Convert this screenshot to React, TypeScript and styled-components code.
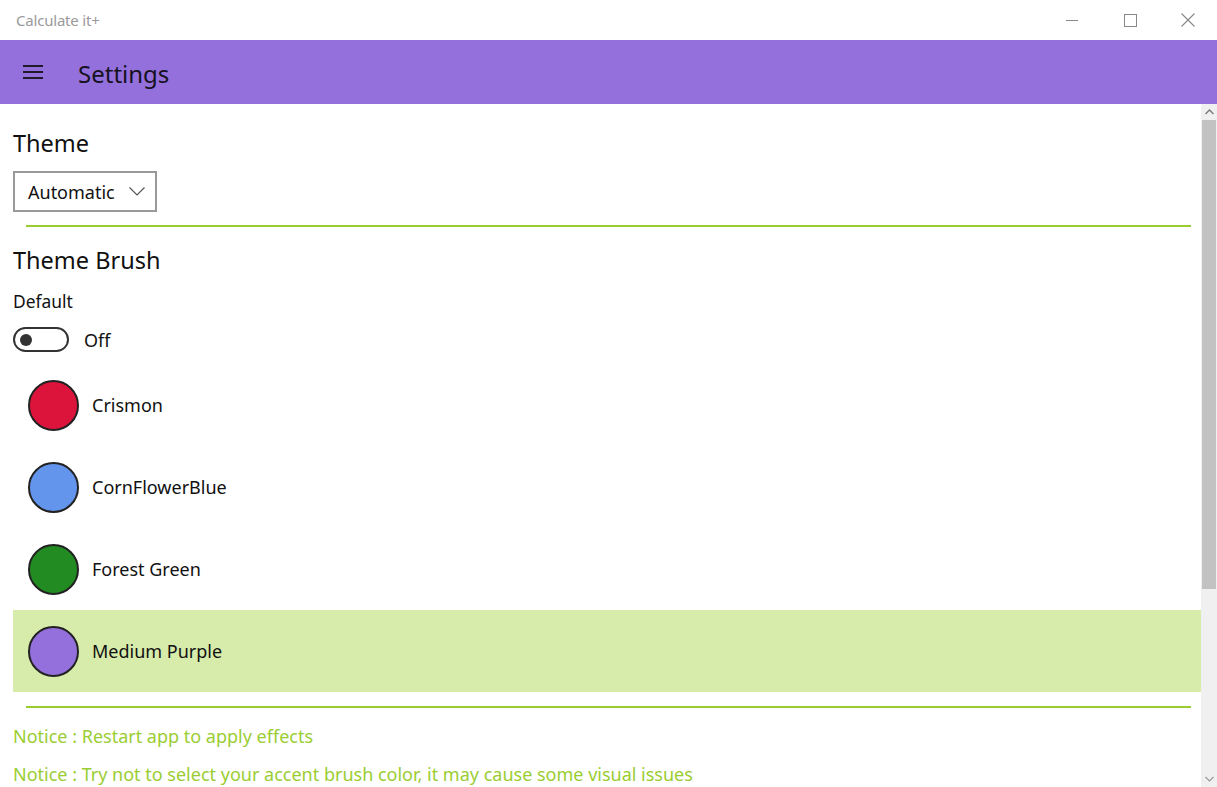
import React from "react";
import styled, { createGlobalStyle } from "styled-components";

const Global = createGlobalStyle`
  html, body { margin: 0; padding: 0; background: #fff; }
  body { font-family: "Noto Sans", "Open Sans", sans-serif; overflow: hidden; }
  * { box-sizing: border-box; }
`;

const Window = styled.div`
  width: 1217px;
  height: 787px;
  display: flex;
  flex-direction: column;
  overflow: hidden;
  background: #fff;
`;

const TitleBar = styled.div`
  height: 40px;
  display: flex;
  align-items: center;
  justify-content: space-between;
  padding-left: 16px;
  flex: none;
`;

const TitleText = styled.span`
  font-size: 15px;
  color: #9a9a9a;
  letter-spacing: -0.2px;
`;

const Controls = styled.div`
  display: flex;
  height: 100%;
`;

const CtrlButton = styled.div`
  width: 58px;
  height: 100%;
  display: flex;
  align-items: center;
  justify-content: center;
`;

const Header = styled.div`
  height: 64px;
  background: #9370db;
  display: flex;
  align-items: center;
  flex: none;
`;

const Burger = styled.div`
  width: 20px;
  margin-left: 23px;
  display: flex;
  flex-direction: column;
  gap: 4px;
  span {
    display: block;
    height: 2px;
    background: #1f1a2a;
  }
`;

const HeaderTitle = styled.h1`
  margin: 3px 0 0 35px;
  font-size: 24px;
  font-weight: 400;
  color: #16121e;
  line-height: 1;
`;

const Body = styled.div`
  flex: 1;
  display: flex;
  min-height: 0;
`;

const Content = styled.div`
  flex: 1;
  padding-left: 13px;
  display: flex;
  flex-direction: column;
`;

const SectionTitle = styled.h2<{ $mt: number }>`
  margin: ${(p) => p.$mt}px 0 0 0;
  font-size: 23.5px;
  font-weight: 400;
  line-height: 32px;
  color: #111;
`;

const Dropdown = styled.div`
  margin-top: 12px;
  width: 144px;
  height: 41px;
  border: 2px solid #999;
  display: flex;
  align-items: center;
  justify-content: space-between;
  padding: 0 10px 0 13px;
  font-size: 18px;
  color: #111;
`;

const Divider = styled.div<{ $mt: number }>`
  margin: ${(p) => p.$mt}px 10px 0 13px;
  height: 2px;
  background: #9acd32;
  flex: none;
`;

const Label = styled.div`
  margin-top: 13px;
  font-size: 17.4px;
  line-height: 24px;
  color: #111;
`;

const ToggleRow = styled.div`
  margin-top: 14px;
  height: 25px;
  display: flex;
  align-items: center;
  gap: 15px;
  font-size: 18px;
  color: #111;
`;

const Toggle = styled.div`
  width: 56px;
  height: 25px;
  border: 2px solid #333;
  border-radius: 13px;
  display: flex;
  align-items: center;
  padding-left: 5px;
  &::before {
    content: "";
    width: 12px;
    height: 12px;
    border-radius: 50%;
    background: #333;
  }
`;

const List = styled.div`
  margin-top: 12px;
  display: flex;
  flex-direction: column;
`;

const Row = styled.div<{ $selected?: boolean }>`
  height: 82px;
  display: flex;
  align-items: center;
  padding-left: 15px;
  gap: 13px;
  background: ${(p) => (p.$selected ? "#d7ebab" : "transparent")};
  font-size: 18px;
  color: #111;
`;

const Swatch = styled.div<{ $color: string }>`
  width: 51px;
  height: 51px;
  border-radius: 50%;
  border: 2px solid #222;
  background: ${(p) => p.$color};
  flex: none;
`;

const Notice = styled.div<{ $mt: number }>`
  margin-top: ${(p) => p.$mt}px;
  font-size: 18px;
  line-height: 26px;
  color: #9acd32;
`;

const ScrollBar = styled.div`
  width: 16px;
  background: #f0f0f0;
  display: flex;
  flex-direction: column;
  flex: none;
`;

const Arrow = styled.div`
  height: 16px;
  display: flex;
  align-items: center;
  justify-content: center;
  flex: none;
`;

const Thumb = styled.div`
  height: 469px;
  margin: 0 1px 0 1px;
  background: #c2c2c2;
  flex: none;
`;

const Track = styled.div`
  flex: 1;
`;

const colors = [
  { name: "Crismon", color: "#dc143c" },
  { name: "CornFlowerBlue", color: "#6495ed" },
  { name: "Forest Green", color: "#228b22" },
  { name: "Medium Purple", color: "#9370db", selected: true },
];

export default function App() {
  return (
    <Window>
      <Global />
      <TitleBar>
        <TitleText>Calculate it+</TitleText>
        <Controls>
          <CtrlButton>
            <svg width="12" height="12" viewBox="0 0 12 12">
              <line x1="0" y1="6.5" x2="12" y2="6.5" stroke="#888" strokeWidth="1" />
            </svg>
          </CtrlButton>
          <CtrlButton>
            <svg width="13" height="13" viewBox="0 0 13 13">
              <rect x="0.5" y="0.5" width="12" height="12" fill="none" stroke="#888" strokeWidth="1" />
            </svg>
          </CtrlButton>
          <CtrlButton>
            <svg width="14" height="14" viewBox="0 0 14 14">
              <path d="M0.5 0.5 L13.5 13.5 M13.5 0.5 L0.5 13.5" stroke="#888" strokeWidth="1.1" />
            </svg>
          </CtrlButton>
        </Controls>
      </TitleBar>
      <Header>
        <Burger>
          <span />
          <span />
          <span />
        </Burger>
        <HeaderTitle>Settings</HeaderTitle>
      </Header>
      <Body>
        <Content>
          <SectionTitle $mt={23}>Theme</SectionTitle>
          <Dropdown>
            <span>Automatic</span>
            <svg width="16" height="9" viewBox="0 0 16 9">
              <path d="M0.5 0.5 L8 8 L15.5 0.5" fill="none" stroke="#555" strokeWidth="1.2" />
            </svg>
          </Dropdown>
          <Divider $mt={13} />
          <SectionTitle $mt={17}>Theme Brush</SectionTitle>
          <Label>Default</Label>
          <ToggleRow>
            <Toggle />
            <span>Off</span>
          </ToggleRow>
          <List>
            {colors.map((c) => (
              <Row key={c.name} $selected={c.selected}>
                <Swatch $color={c.color} />
                <span>{c.name}</span>
              </Row>
            ))}
          </List>
          <Divider $mt={14} />
          <Notice $mt={15}>Notice : Restart app to apply effects</Notice>
          <Notice $mt={12}>Notice : Try not to select your accent brush color, it may cause some visual issues</Notice>
        </Content>
        <ScrollBar>
          <Arrow>
            <svg width="9" height="6" viewBox="0 0 9 6">
              <path d="M0.5 5 L4.5 1 L8.5 5" fill="none" stroke="#777" strokeWidth="1.3" />
            </svg>
          </Arrow>
          <Thumb />
          <Track />
          <Arrow>
            <svg width="9" height="6" viewBox="0 0 9 6">
              <path d="M0.5 1 L4.5 5 L8.5 1" fill="none" stroke="#999" strokeWidth="1.1" />
            </svg>
          </Arrow>
        </ScrollBar>
      </Body>
    </Window>
  );
}
